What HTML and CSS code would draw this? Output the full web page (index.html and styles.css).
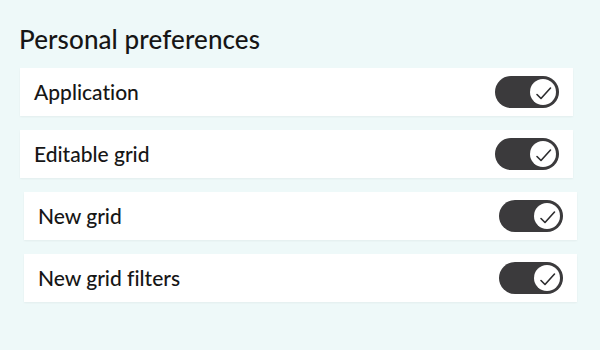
FILE: index.html
```html
<!DOCTYPE html>
<html lang="en">
<head>
<meta charset="utf-8">
<title>Personal preferences</title>
<link rel="stylesheet" href="styles.css">
</head>
<body>
<main class="prefs">
  <h1 class="prefs-title">Personal preferences</h1>
  <div class="prefs-list">
    <div class="pref-card">
      <span class="pref-label">Application</span>
      <span class="toggle"><span class="knob"><svg viewBox="0 0 26 26" width="26" height="26"><path d="M7 15.5 L11 19.5 L20.5 9" fill="none" stroke="#2b2b2d" stroke-width="1.6" stroke-linecap="round" stroke-linejoin="round"/></svg></span></span>
    </div>
    <div class="pref-card">
      <span class="pref-label">Editable grid</span>
      <span class="toggle"><span class="knob"><svg viewBox="0 0 26 26" width="26" height="26"><path d="M7 15.5 L11 19.5 L20.5 9" fill="none" stroke="#2b2b2d" stroke-width="1.6" stroke-linecap="round" stroke-linejoin="round"/></svg></span></span>
    </div>
    <div class="pref-card pref-card--shifted">
      <span class="pref-label">New grid</span>
      <span class="toggle"><span class="knob"><svg viewBox="0 0 26 26" width="26" height="26"><path d="M7 15.5 L11 19.5 L20.5 9" fill="none" stroke="#2b2b2d" stroke-width="1.6" stroke-linecap="round" stroke-linejoin="round"/></svg></span></span>
    </div>
    <div class="pref-card pref-card--shifted">
      <span class="pref-label">New grid filters</span>
      <span class="toggle"><span class="knob"><svg viewBox="0 0 26 26" width="26" height="26"><path d="M7 15.5 L11 19.5 L20.5 9" fill="none" stroke="#2b2b2d" stroke-width="1.6" stroke-linecap="round" stroke-linejoin="round"/></svg></span></span>
    </div>
  </div>
</main>
</body>
</html>
```

FILE: styles.css
```css
html, body {
  margin: 0;
  padding: 0;
}
body {
  background: #eef9f9;
  font-family: "Lato", "Noto Sans", sans-serif;
  font-variant-ligatures: none;
  color: #161616;
  width: 600px;
  height: 350px;
  overflow: hidden;
}
.prefs {
  padding: 24px 27px 0 20px;
}
.prefs-title {
  margin: 0 0 14px -1px;
  font-size: 26px;
  line-height: 30px;
  font-weight: 500;
  letter-spacing: 0.1px;
}
.prefs-list {
  display: flex;
  flex-direction: column;
  gap: 14px;
}
.pref-card {
  height: 48px;
  box-sizing: border-box;
  background: #ffffff;
  box-shadow: 0 1px 2px rgba(0, 0, 0, 0.05);
  display: flex;
  align-items: center;
  justify-content: space-between;
  padding: 0 14px 0 14px;
}
.pref-card--shifted {
  margin-left: 4px;
  margin-right: -4px;
}
.pref-label {
  font-size: 21px;
  font-weight: 500;
  line-height: 25px;
  margin-bottom: 2px;
}
.toggle {
  width: 64px;
  height: 32px;
  border-radius: 16px;
  background: #3b3a3c;
  display: flex;
  align-items: center;
  justify-content: flex-end;
  padding: 0 3px;
  box-sizing: border-box;
}
.knob {
  width: 26px;
  height: 26px;
  border-radius: 50%;
  background: #ffffff;
  display: block;
}
.knob svg {
  display: block;
}
```
